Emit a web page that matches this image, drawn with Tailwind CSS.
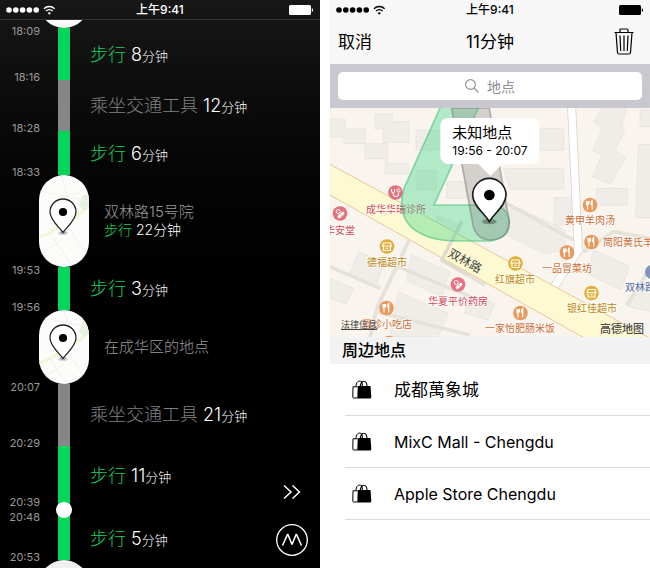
<!DOCTYPE html>
<html lang="zh-CN">
<head>
<meta charset="utf-8">
<meta name="viewport" content="width=device-width, initial-scale=1">
<title>时间线</title>
<script src="https://cdn.jsdelivr.net/npm/@tailwindcss/browser@4"></script>
</head>
<body class="bg-white font-['Inter','Noto_Sans_CJK_SC',sans-serif]">

<!-- Shared symbols -->
<svg class="hidden" aria-hidden="true">
  <symbol id="signal" viewBox="0 0 50 12">
    <g fill="currentColor">
      <circle cx="3" cy="6" r="2.8"/><circle cx="9.8" cy="6" r="2.8"/><circle cx="16.6" cy="6" r="2.8"/><circle cx="23.4" cy="6" r="2.8"/><circle cx="30.2" cy="6" r="2.8"/>
      <path d="M41.7 9a2.2 2.2 0 0 1 3.200 0L43.300 10.800z"/>
    </g>
    <g fill="none" stroke="currentColor" stroke-width="1.400">
      <path d="M38 4.700a7.600 7.600 0 0 1 10.600 0"/><path d="M40 7a4.800 4.800 0 0 1 6.600 0"/>
    </g>
  </symbol>
  <symbol id="battery" viewBox="0 0 25 10">
    <rect width="22" height="10" rx="1.5" fill="currentColor"/><path d="M22.8 3.2c1.6.2 1.6 3.4 0 3.6z" fill="currentColor"/>
  </symbol>
  <symbol id="pin" viewBox="0 0 28 38">
    <ellipse cx="14" cy="35" rx="5" ry="2" fill="#000" opacity=".15"/><ellipse cx="14" cy="34.6" rx="3" ry="1.3" fill="#000" opacity=".25"/>
    <path d="M14 34.4C11 30 1 22 1 14a13 13 0 0 1 26 0c0 8-10 16-13 20.4z" fill="#fff" stroke="#222" stroke-width="1.3"/>
    <circle cx="14" cy="14" r="4.1" fill="#000"/>
  </symbol>
  <symbol id="minimap" viewBox="0 0 50 92" preserveAspectRatio="xMidYMid slice">
    <rect width="50" height="92" fill="#fcfcfb"/>
    <path d="M0 62C14 58 18 52 26 48S44 38 50 30" fill="none" stroke="#f5f6d8" stroke-width="3"/>
    <path d="M40 30l4-10h6v12l-6 4z" fill="#e8f0e2"/>
    <path d="M0 16l50 10M22 0l8 26M10 56l24 36M26 48l24 34M0 80l24-16M34 20l16-8" fill="none" stroke="#f0f0ef" stroke-width="1"/>
  </symbol>
  <symbol id="bags" viewBox="0 0 20 19">
    <path d="M5.500 6.800H1L.8 17q0 1 1 1h4" fill="none" stroke="#000" stroke-width="1"/>
    <path d="M4 6.500C4 0 9 0 10.500 3" fill="none" stroke="#000" stroke-width="1"/>
    <path d="M8.300 7C8.300-.6 15-.6 15 7M10.400 7c0-3-.2-4.400-1.200-5.200" fill="none" stroke="#000" stroke-width="1.100"/>
    <path d="M5.800 6h12.700L19.300 17q0 1.500-1.500 1.500H6.500q-1.300 0-1.200-1.500z" fill="#000"/>
  </symbol>
  <symbol id="food" viewBox="-8 -8 16 16">
    <circle r="7.300" fill="#e89a5c"/><path d="M-3.500-4v3q0 1 1 1.200V4.500M-2.200-4v3.500M-1-4v3.500M2.200 4.500v-9c-1.400 1-1.400 4 0 5" fill="none" stroke="#fff" stroke-width="1.200"/>
  </symbol>
  <symbol id="market" viewBox="-8 -8 16 16">
    <circle r="7.300" fill="#e2ae37"/><path d="M-3.500-3.500h7l1 3h-9zM-3.500 0v4h7V0M-1.500 1.800h3" fill="none" stroke="#fff" stroke-width="1.100"/>
  </symbol>
  <symbol id="clinic" viewBox="-8 -8 16 16">
    <circle r="7.300" fill="#e5707e"/><path d="M-4-3.500v2.500q1.500 3 3 0v-2.500M-2.500 .5q0 3.500 3 3.500T3 0" fill="none" stroke="#fff" stroke-width="1.100"/><circle cx="3" cy="-2" r="1.600" fill="none" stroke="#fff"/>
  </symbol>
  <symbol id="pharmacy" viewBox="-8 -8 16 16">
    <circle r="7.300" fill="#e5707e"/><circle cx="-1.800" cy="-2" r="2" fill="none" stroke="#fff"/><path d="M-.8 3.200l3.600-3.400" stroke="#fff" stroke-width="3.200" stroke-linecap="round"/><path d="M.4 .6l1.400 1.600" stroke="#e5707e" stroke-width=".8"/>
  </symbol>
</svg>

<div class="flex gap-[10px]">

  <!-- Timeline screen -->
  <section class="relative min-h-screen min-w-0 flex-1 bg-linear-to-b from-[#171717] to-black to-70% text-white">
    <header class="grid h-5 grid-cols-3 items-center border-b border-[#333] px-1.5 text-xs font-medium">
      <svg class="h-3 w-[50px]" aria-label="信号"><use href="#signal"/></svg>
      <span class="text-center">上午9:41</span>
      <svg class="h-[10px] w-[25px] justify-self-end" aria-label="电量"><use href="#battery"/></svg>
    </header>

    <ol class="text-lg leading-6">
      <li class="flex h-2 overflow-hidden pl-[39px]">
        <div class="flex h-2 w-[50px] flex-col justify-end overflow-hidden"><div class="h-[50px] shrink-0 rounded-full bg-[#fafaf8]"></div></div>
      </li>
      <li class="flex h-[52px] items-center">
        <div class="flex w-[58px] flex-col justify-between self-stretch pr-[18px] text-right text-[11px] leading-[10px] text-[#999]"><time class="-mt-0.5">18:09</time><time class="-mb-0.5">18:16</time></div>
        <div class="w-3 self-stretch bg-[#04d65c]"></div>
        <p class="pt-0.5 pl-5 font-light"><span class="text-[#17cf60]">步行</span> 8<span class="text-[13px]">分钟</span></p>
      </li>
      <li class="flex h-[51px] items-center">
        <div class="flex w-[58px] flex-col justify-end self-stretch pr-[18px] text-right text-[11px] leading-[10px] text-[#999]"><time class="-mb-0.5">18:28</time></div>
        <div class="w-3 self-stretch bg-[#868686]"></div>
        <p class="pt-0.5 pl-5 font-light"><span class="text-[#808080]">乘坐交通工具</span> 12<span class="text-[13px]">分钟</span></p>
      </li>
      <li class="flex h-11 items-center">
        <div class="flex w-[58px] flex-col justify-end self-stretch pr-[18px] text-right text-[11px] leading-[10px] text-[#999]"><time class="-mb-0.5">18:33</time></div>
        <div class="w-3 self-stretch bg-[#04d65c]"></div>
        <p class="pt-0.5 pl-5 font-light"><span class="text-[#17cf60]">步行</span> 6<span class="text-[13px]">分钟</span></p>
      </li>
      <li class="flex h-[92px] items-center pl-[39px]">
        <div class="grid w-[50px] place-items-center self-stretch overflow-hidden rounded-full">
          <svg class="col-start-1 row-start-1 h-[92px] w-[50px]" aria-hidden="true"><use href="#minimap"/></svg>
          <svg class="col-start-1 row-start-1 mr-0.5 mb-2 h-[38px] w-7" aria-hidden="true"><use href="#pin"/></svg>
        </div>
        <div class="pl-[15px]">
          <p class="text-[15px] font-light leading-[18px] text-[#999]">双林路15号院</p>
          <p class="text-sm leading-[18px] font-light"><span class="text-[#17cf60]">步行</span> 22分钟</p>
        </div>
      </li>
      <li class="flex h-[43px] items-center">
        <div class="flex w-[58px] flex-col justify-between self-stretch pr-[18px] text-right text-[11px] leading-[10px] text-[#999]"><time class="-mt-0.5">19:53</time><time class="-mb-0.5">19:56</time></div>
        <div class="w-3 self-stretch bg-[#04d65c]"></div>
        <p class="pt-0.5 pl-5 font-light"><span class="text-[#17cf60]">步行</span> 3<span class="text-[13px]">分钟</span></p>
      </li>
      <li class="flex h-[74px] items-center pl-[39px]">
        <div class="grid w-[50px] place-items-center self-stretch overflow-hidden rounded-full">
          <svg class="col-start-1 row-start-1 h-[74px] w-[50px]" aria-hidden="true"><use href="#minimap"/></svg>
          <svg class="col-start-1 row-start-1 mr-0.5 mb-2 h-[38px] w-7" aria-hidden="true"><use href="#pin"/></svg>
        </div>
        <p class="pl-[15px] text-[15px] font-light leading-[18px] text-[#999]">在成华区的地点</p>
      </li>
      <li class="flex h-[62px] items-center">
        <div class="flex w-[58px] flex-col justify-between self-stretch pr-[18px] text-right text-[11px] leading-[10px] text-[#999]"><time class="-mt-0.5">20:07</time><time class="-mb-0.5">20:29</time></div>
        <div class="w-3 self-stretch bg-[#868686]"></div>
        <p class="pl-5 font-light"><span class="text-[#808080]">乘坐交通工具</span> 21<span class="text-[13px]">分钟</span></p>
      </li>
      <li class="flex h-14 items-center">
        <div class="w-[58px]"></div>
        <div class="w-3 self-stretch bg-[#04d65c]"></div>
        <p class="pt-1 pl-5 font-light"><span class="text-[#17cf60]">步行</span> 11<span class="text-[13px]">分钟</span></p>
      </li>
      <li class="flex h-4 items-center">
        <div class="flex w-14 flex-col items-end pr-4 text-[11px] leading-[15px] text-[#999]"><time>20:39</time><time>20:48</time></div>
        <div class="grid size-4 place-items-center">
          <div class="col-start-1 row-start-1 h-4 w-3 bg-[#04d65c]"></div>
          <div class="col-start-1 row-start-1 size-4 rounded-full bg-white"></div>
        </div>
      </li>
      <li class="flex h-[42px] items-center">
        <div class="flex w-[58px] flex-col justify-end self-stretch pr-[18px] text-right text-[11px] leading-[10px] text-[#999]"><time class="-mb-0.5">20:53</time></div>
        <div class="w-3 self-stretch bg-[#04d65c]"></div>
        <p class="pl-5 font-light"><span class="text-[#17cf60]">步行</span> 5<span class="text-[13px]">分钟</span></p>
      </li>
      <li class="flex h-2 overflow-hidden pl-[39px]">
        <div class="h-[50px] w-[50px] rounded-full bg-[#f0f0ee]"></div>
      </li>
    </ol>

    <!-- Floating controls -->
    <div class="absolute right-3 bottom-3 flex flex-col items-center gap-5">
      <button type="button" aria-label="下一步" class="p-1"><svg class="h-4 w-[18px]" viewBox="0 0 18 16" fill="none" stroke="#fff" stroke-width="1.500"><path d="M1 1.500L8 8l-7 6.500M9.500 1.500l7 6.500-7 6.500"/></svg></button>
      <button type="button" aria-label="菜单"><svg class="size-8" viewBox="0 0 32 32" fill="none" stroke="#fff"><circle cx="16" cy="16" r="15.300" stroke-width="1.300"/><path d="M6.500 21.500L11.700 10l4.300 10.500L20.300 10 25.500 21.500" stroke-width="1.600" stroke-linejoin="bevel"/></svg></button>
    </div>
  </section>

  <!-- Place picker screen -->
  <section class="min-h-screen min-w-0 flex-1 bg-white text-black">
    <div class="bg-[#f7f7f7]">
      <header class="grid h-5 grid-cols-3 items-center px-1.5 text-xs font-medium">
        <svg class="h-3 w-[50px]" aria-label="信号"><use href="#signal"/></svg>
        <span class="text-center">上午9:41</span>
        <svg class="h-[10px] w-[25px] justify-self-end" aria-label="电量"><use href="#battery"/></svg>
      </header>
      <nav class="grid h-11 grid-cols-3 items-center pr-4 pl-2 text-[17px]">
        <button type="button" class="justify-self-start pt-0.5">取消</button>
        <h1 class="pt-0.5 pl-2 text-center">11分钟</h1>
        <button type="button" aria-label="删除" class="justify-self-end pb-0.5"><svg class="h-[27px] w-5" viewBox="0 0 20 27" fill="none" stroke="#000" stroke-width="1.200"><path d="M.5 4.500h19M6 4.300V2q0-1 1-1h6q1 0 1 1v2.300M2 4.700l1.500 19.800q.1 1.500 1.500 1.500h10q1.400 0 1.500-1.500L18 4.700M6 7.500l.7 15.500M10 7.500V23M14 7.500L13.300 23"/></svg></button>
      </nav>
    </div>

    <div class="bg-[#c9c8ce] p-2">
      <label class="flex h-7 items-center justify-center gap-2 rounded-[5px] bg-white">
        <svg class="size-[14px]" viewBox="0 0 14 14" fill="none" stroke="#8e8e93" stroke-width="1.100" aria-hidden="true"><circle cx="5.500" cy="5.500" r="4.900"/><path d="M9 9l4.500 4.500"/></svg>
        <input type="search" aria-label="地点" placeholder="地点" class="field-sizing-content bg-transparent text-sm outline-none placeholder:text-[#8e8e93]">
      </label>
    </div>

    <!-- Map -->
    <div class="relative h-[229px] overflow-hidden">
      <svg class="size-full" viewBox="0 0 320 229" preserveAspectRatio="xMidYMid slice" role="img" aria-label="地图">
        <rect width="320" height="229" fill="#f9f5ee"/>
        <svg x="0" y="0" width="320" height="229" viewBox="0 9 960 687">
          <!-- Buildings -->
          <g fill="#f0ece7" stroke="#e6e1dc" stroke-width="2">
            <path d="M0 42h45v30h60v44h68v60h62v30h-70v-45h-60v-45H42V96H0zM135 28h52v22h50v62h-78V72h-24z"/>
            <path d="M258 75h75v60h-75zM258 195h60v60h-60zM520 190h182v62H540zM630 70h72v66h-72zM350 230h60v50h-60zM672 278h50v82h-50zM800 250h92v50h-92zM925 118h40v220h-48zM930 15h35v50h-35z"/>
            <path d="M815 9h75l-15 55 10 12-30 60 32 20-45 82-55-22 30-68-30-12 30-65-25-20z"/>
            <path d="M545 300l160 75v60l-60 12-120-60zM790 435l108 48-25 72-100-48zM85 440l80 30-28 72-78-34zM245 450l115 50-25 75-105-48zM205 560l150 65-30 70H180zM0 520l70 30-20 48-50-18zM320 330l75 30-15 40-60-20zM935 530h30v90l-70-15zM420 570l75 25-22 50-70-20z"/>
          </g>
          <!-- Footpaths -->
          <g fill="none" stroke="#e5e2da" stroke-width="11" stroke-linejoin="round">
            <path d="M0 485l150 65M240 400L140 610l-20 90M180 475l290 120M395 350l-60 115 130 75M530 295l200 110M140 620l280 70M760 440l90-60 110 20M960 490l-70 110"/>
          </g>
          <!-- Roads -->
          <path d="M725 9l20 425-78 120" fill="none" stroke="#d8d4d2" stroke-width="27"/>
          <path d="M725 9l20 425-78 120" fill="none" stroke="#fff" stroke-width="22"/>
          <path d="M0 178L960 700H760L0 270z" fill="#fdf9d2"/>
          <path d="M0 178L960 700M0 270l800 450" fill="none" stroke="#eac69a" stroke-width="3"/>
          <path d="M395 350l-60 115 80 46" fill="none" stroke="#dedad0" stroke-width="10"/>
          <path d="M745 434l-66 101" stroke="#fff" stroke-width="22"/>
        </svg>

        <!-- Place markers -->
        <use href="#clinic" x="57.500" y="76.500" width="16" height="16"/>
        <use href="#pharmacy" x="2" y="97.500" width="16" height="16"/>
        <use href="#pharmacy" x="120" y="168.500" width="16" height="16"/>
        <use href="#market" x="49" y="130.500" width="16" height="16"/>
        <use href="#market" x="177.500" y="147.500" width="16" height="16"/>
        <use href="#market" x="253.500" y="177" width="16" height="16"/>
        <use href="#food" x="252" y="89" width="16" height="16"/>
        <use href="#food" x="253.500" y="126" width="16" height="16"/>
        <use href="#food" x="229" y="136.500" width="16" height="16"/>
        <use href="#food" x="48.500" y="192" width="16" height="16"/>
        <use href="#food" x="182.500" y="197" width="16" height="16"/>
        <use href="#food" x="51" y="227" width="16" height="16"/>
        <circle cx="322" cy="164" r="7" fill="#8490bd"/>
        <g font-size="10" stroke="#fff" stroke-width="2" stroke-opacity=".6" paint-order="stroke" text-anchor="middle">
          <g fill="#cf4a5c">
            <text x="66" y="105">成华华瑞诊所</text><text x="10" y="126">华安堂</text><text x="128" y="197">华夏平价药房</text>
          </g>
          <g fill="#bd8a12">
            <text x="57" y="158">德福超市</text><text x="185" y="175">红旗超市</text><text x="262" y="204">银红佳超市</text>
          </g>
          <g fill="#cd6d34">
            <text x="260" y="116">黄甲羊肉汤</text><text x="298" y="138">简阳黄氏羊</text><text x="237" y="164">一品冒菜坊</text><text x="57" y="220">冒诊小吃店</text><text x="190" y="224">一家怡肥肠米饭</text>
          </g>
          <text x="310" y="183" fill="#5266a0">双林路</text>
        </g>
        <text x="135" y="157" font-size="12" fill="#444" text-anchor="middle" transform="rotate(29 135 153)">双林路</text>

        <!-- Tracks -->
        <svg x="0" y="0" width="320" height="229" viewBox="0 9 960 687">
          <path d="M330 9L222 250Q200 325 245 368 290 405 370 408H480Q538 400 538 350 530 300 485 300H312L449 0H334z" fill="#35d680" fill-opacity=".36" stroke="#2fb974" stroke-opacity=".5" stroke-width="5"/>
          <path d="M365 9L428 355Q436 405 486 405 538 400 538 350L478 9z" fill="#888" fill-opacity=".33" stroke="#777" stroke-opacity=".5" stroke-width="5"/>
          <ellipse cx="478" cy="350" rx="22" ry="8" fill="#000" opacity=".3"/>
          <path d="M478 350C464 325 428 302 428 270a50 50 0 0 1 100 0c0 32-36 55-50 80z" fill="#fff" stroke="#1c1c1c" stroke-width="5"/>
          <circle cx="478" cy="270" r="16" fill="#000"/>
        </svg>
        <text x="270" y="225" font-size="11" font-weight="500" fill="#4a4a4a">高德地图</text>
      </svg>
      <a href="#" class="absolute bottom-1.5 left-[11px] text-[9px] text-[#444] underline">法律信息</a>
      <div class="absolute top-[10px] left-1/2 -translate-x-1/2 whitespace-nowrap rounded-lg bg-white px-3 pt-1.5 pb-1">
        <p class="text-[15px] leading-[18px]">未知地点</p>
        <p class="text-xs leading-[18px]">19:56 - 20:07</p>
        <svg class="absolute top-full left-1/2 h-3 w-6 -translate-x-1/2" viewBox="0 0 24 12" aria-hidden="true"><path d="M0 0h24L12 12z" fill="#fff"/></svg>
      </div>
    </div>

    <h2 class="bg-[#f2f2f2] px-3 text-base leading-[27px] font-medium">周边地点</h2>
    <ul class="pl-[15px] text-base">
      <li class="border-b border-[#dcdcdf]"><button type="button" class="flex h-[51px] w-full items-center gap-[22px] pl-[7px] text-left"><svg class="h-[19px] w-5" aria-hidden="true"><use href="#bags"/></svg><span class="pt-0.5 text-[17px]">成都萬象城</span></button></li>
      <li class="border-b border-[#dcdcdf]"><button type="button" class="flex h-[51px] w-full items-center gap-[22px] pl-[7px] text-left"><svg class="h-[19px] w-5" aria-hidden="true"><use href="#bags"/></svg><span>MixC Mall - Chengdu</span></button></li>
      <li class="border-b border-[#dcdcdf]"><button type="button" class="flex h-[51px] w-full items-center gap-[22px] pl-[7px] text-left"><svg class="h-[19px] w-5" aria-hidden="true"><use href="#bags"/></svg><span>Apple Store Chengdu</span></button></li>
    </ul>
  </section>
</div>
</body>
</html>
